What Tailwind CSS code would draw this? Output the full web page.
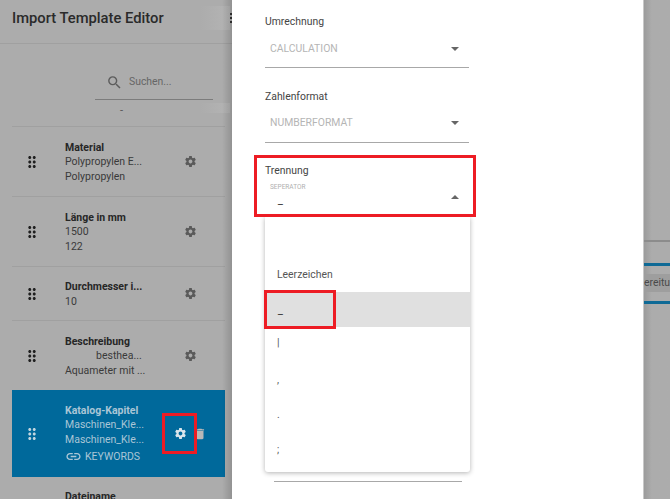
<!DOCTYPE html>
<html lang="en">
<head>
    <meta charset="UTF-8">
    <title>Import Template Editor</title>
    <script src="https://cdn.jsdelivr.net/npm/@tailwindcss/browser@4"></script>
</head>
<body class="bg-[#acacac] overflow-hidden font-['Roboto',sans-serif]">
    <div class="relative flex w-[670px] h-[499px] overflow-hidden">

        <!-- Sidebar -->
        <aside class="relative w-[232px] h-full shrink-0 overflow-hidden">
            <header class="h-[44px] border-b border-[#a0a0a0] pl-3 pt-[8px] text-[14.75px] leading-[21px] font-medium text-[#2a2a2a]">Import Template Editor</header>
            <div class="absolute left-[200px] top-[6px] w-[30px] h-[24px] bg-gradient-to-r from-transparent to-[#b4b4b4]"></div>
            <div class="absolute left-[230px] top-[13px] flex flex-col gap-[2px]">
                <span class="w-[2px] h-[2px] bg-[#333]"></span>
                <span class="w-[2px] h-[2px] bg-[#333]"></span>
                <span class="w-[2px] h-[2px] bg-[#333]"></span>
            </div>

            <div class="ml-[95px] mt-[29px] w-[118px] h-[27px] border-b border-[#7c7c7c] flex items-start gap-[6px] pl-[11px] pt-[1px]">
                <svg class="w-[17px] h-[17px] text-[#5c5c5c]" viewBox="0 0 24 24" fill="currentColor"><path d="M15.5 14h-.79l-.28-.27A6.47 6.47 0 0 0 16 9.5 6.5 6.5 0 1 0 9.5 16c1.61 0 3.09-.59 4.23-1.57l.27.28v.79l5 4.99L20.49 19l-4.99-5zm-6 0C7.01 14 5 11.99 5 9.5S7.01 5 9.5 5 14 7.01 14 9.5 11.99 14 9.5 14z"/></svg>
                <span class="text-[10.4px] leading-[16px] text-[#666]">Suchen...</span>
            </div>
            <div class="absolute left-[200px] top-[103px] w-[30px] h-[10px] bg-gradient-to-r from-transparent to-[#b4b4b4]"></div>
            <div class="h-[26px] pl-[120px] pt-[4px] text-[11px] leading-[14px] text-[#555]">-</div>

            <!-- Rows -->
            <div class="mx-3 w-[213px] text-[10.5px] leading-[14.5px] text-[#3a3a3a]">
                <div class="h-[70px] border-t border-[#a0a0a0] flex items-center">
                    <svg class="w-[18px] h-[18px] ml-[11px] text-[#1f1f1f]" viewBox="0 0 24 24" fill="currentColor"><path d="M11 18c0 1.1-.9 2-2 2s-2-.9-2-2 .9-2 2-2 2 .9 2 2zm-2-8c-1.1 0-2 .9-2 2s.9 2 2 2 2-.9 2-2-.9-2-2-2zm0-6c-1.1 0-2 .9-2 2s.9 2 2 2 2-.9 2-2-.9-2-2-2zm6 4c1.1 0 2-.9 2-2s-.9-2-2-2-2 .9-2 2 .9 2 2 2zm0 2c-1.1 0-2 .9-2 2s.9 2 2 2 2-.9 2-2-.9-2-2-2zm0 6c-1.1 0-2 .9-2 2s.9 2 2 2 2-.9 2-2-.9-2-2-2z"/></svg>
                    <div class="w-[120px] ml-[24px] pt-[2px]">
                        <div class="font-bold text-[#262626]">Material</div>
                        <div>Polypropylen E...</div>
                        <div>Polypropylen</div>
                    </div>
                    <svg class="w-[13px] h-[13px] ml-[-1px] text-[#5a5a5a]" viewBox="0 0 24 24" fill="currentColor"><path d="M19.43 12.98c.04-.32.07-.64.07-.98s-.03-.66-.07-.98l2.11-1.65c.19-.15.24-.42.12-.64l-2-3.46c-.12-.22-.39-.3-.61-.22l-2.49 1c-.52-.4-1.08-.73-1.69-.98l-.38-2.65A.488.488 0 0 0 14 2h-4c-.25 0-.46.18-.49.42l-.38 2.65c-.61.25-1.17.59-1.69.98l-2.49-1c-.23-.09-.49 0-.61.22l-2 3.46c-.13.22-.07.49.12.64l2.11 1.65c-.04.32-.07.65-.07.98s.03.66.07.98l-2.11 1.65c-.19.15-.24.42-.12.64l2 3.46c.12.22.39.3.61.22l2.49-1c.52.4 1.08.73 1.69.98l.38 2.65c.03.24.24.42.49.42h4c.25 0 .46-.18.49-.42l.38-2.65c.61-.25 1.17-.59 1.69-.98l2.49 1c.23.09.49 0 .61-.22l2-3.46c.12-.22.07-.49-.12-.64l-2.11-1.65zM12 15.5c-1.93 0-3.5-1.57-3.5-3.5s1.57-3.5 3.5-3.5 3.5 1.57 3.5 3.5-1.57 3.5-3.5 3.5z"/></svg>
                </div>
                <div class="h-[70px] border-t border-[#a0a0a0] flex items-center">
                    <svg class="w-[18px] h-[18px] ml-[11px] text-[#1f1f1f]" viewBox="0 0 24 24" fill="currentColor"><path d="M11 18c0 1.1-.9 2-2 2s-2-.9-2-2 .9-2 2-2 2 .9 2 2zm-2-8c-1.1 0-2 .9-2 2s.9 2 2 2 2-.9 2-2-.9-2-2-2zm0-6c-1.1 0-2 .9-2 2s.9 2 2 2 2-.9 2-2-.9-2-2-2zm6 4c1.1 0 2-.9 2-2s-.9-2-2-2-2 .9-2 2 .9 2 2 2zm0 2c-1.1 0-2 .9-2 2s.9 2 2 2 2-.9 2-2-.9-2-2-2zm0 6c-1.1 0-2 .9-2 2s.9 2 2 2 2-.9 2-2-.9-2-2-2z"/></svg>
                    <div class="w-[120px] ml-[24px] pt-[2px]">
                        <div class="font-bold text-[#262626]">Länge in mm</div>
                        <div>1500</div>
                        <div>122</div>
                    </div>
                    <svg class="w-[13px] h-[13px] ml-[-1px] text-[#5a5a5a]" viewBox="0 0 24 24" fill="currentColor"><path d="M19.43 12.98c.04-.32.07-.64.07-.98s-.03-.66-.07-.98l2.11-1.65c.19-.15.24-.42.12-.64l-2-3.46c-.12-.22-.39-.3-.61-.22l-2.49 1c-.52-.4-1.08-.73-1.69-.98l-.38-2.65A.488.488 0 0 0 14 2h-4c-.25 0-.46.18-.49.42l-.38 2.65c-.61.25-1.17.59-1.69.98l-2.49-1c-.23-.09-.49 0-.61.22l-2 3.46c-.13.22-.07.49.12.64l2.11 1.65c-.04.32-.07.65-.07.98s.03.66.07.98l-2.11 1.65c-.19.15-.24.42-.12.64l2 3.46c.12.22.39.3.61.22l2.49-1c.52.4 1.08.73 1.69.98l.38 2.65c.03.24.24.42.49.42h4c.25 0 .46-.18.49-.42l.38-2.65c.61-.25 1.17-.59 1.69-.98l2.49 1c.23.09.49 0 .61-.22l2-3.46c.12-.22.07-.49-.12-.64l-2.11-1.65zM12 15.5c-1.93 0-3.5-1.57-3.5-3.5s1.57-3.5 3.5-3.5 3.5 1.57 3.5 3.5-1.57 3.5-3.5 3.5z"/></svg>
                </div>
                <div class="h-[54px] border-t border-[#a0a0a0] flex items-center">
                    <svg class="w-[18px] h-[18px] ml-[11px] text-[#1f1f1f]" viewBox="0 0 24 24" fill="currentColor"><path d="M11 18c0 1.1-.9 2-2 2s-2-.9-2-2 .9-2 2-2 2 .9 2 2zm-2-8c-1.1 0-2 .9-2 2s.9 2 2 2 2-.9 2-2-.9-2-2-2zm0-6c-1.1 0-2 .9-2 2s.9 2 2 2 2-.9 2-2-.9-2-2-2zm6 4c1.1 0 2-.9 2-2s-.9-2-2-2-2 .9-2 2 .9 2 2 2zm0 2c-1.1 0-2 .9-2 2s.9 2 2 2 2-.9 2-2-.9-2-2-2zm0 6c-1.1 0-2 .9-2 2s.9 2 2 2 2-.9 2-2-.9-2-2-2z"/></svg>
                    <div class="w-[120px] ml-[24px] pt-[2px]">
                        <div class="font-bold text-[#262626]">Durchmesser i...</div>
                        <div>10</div>
                    </div>
                    <svg class="w-[13px] h-[13px] ml-[-1px] text-[#5a5a5a]" viewBox="0 0 24 24" fill="currentColor"><path d="M19.43 12.98c.04-.32.07-.64.07-.98s-.03-.66-.07-.98l2.11-1.65c.19-.15.24-.42.12-.64l-2-3.46c-.12-.22-.39-.3-.61-.22l-2.49 1c-.52-.4-1.08-.73-1.69-.98l-.38-2.65A.488.488 0 0 0 14 2h-4c-.25 0-.46.18-.49.42l-.38 2.65c-.61.25-1.17.59-1.69.98l-2.49-1c-.23-.09-.49 0-.61.22l-2 3.46c-.13.22-.07.49.12.64l2.11 1.65c-.04.32-.07.65-.07.98s.03.66.07.98l-2.11 1.65c-.19.15-.24.42-.12.64l2 3.46c.12.22.39.3.61.22l2.49-1c.52.4 1.08.73 1.69.98l.38 2.65c.03.24.24.42.49.42h4c.25 0 .46-.18.49-.42l.38-2.65c.61-.25 1.17-.59 1.69-.98l2.49 1c.23.09.49 0 .61-.22l2-3.46c.12-.22.07-.49-.12-.64l-2.11-1.65zM12 15.5c-1.93 0-3.5-1.57-3.5-3.5s1.57-3.5 3.5-3.5 3.5 1.57 3.5 3.5-1.57 3.5-3.5 3.5z"/></svg>
                </div>
                <div class="h-[70px] border-t border-[#a0a0a0] flex items-center">
                    <svg class="w-[18px] h-[18px] ml-[11px] text-[#1f1f1f]" viewBox="0 0 24 24" fill="currentColor"><path d="M11 18c0 1.1-.9 2-2 2s-2-.9-2-2 .9-2 2-2 2 .9 2 2zm-2-8c-1.1 0-2 .9-2 2s.9 2 2 2 2-.9 2-2-.9-2-2-2zm0-6c-1.1 0-2 .9-2 2s.9 2 2 2 2-.9 2-2-.9-2-2-2zm6 4c1.1 0 2-.9 2-2s-.9-2-2-2-2 .9-2 2 .9 2 2 2zm0 2c-1.1 0-2 .9-2 2s.9 2 2 2 2-.9 2-2-.9-2-2-2zm0 6c-1.1 0-2 .9-2 2s.9 2 2 2 2-.9 2-2-.9-2-2-2z"/></svg>
                    <div class="w-[120px] ml-[24px] pt-[2px]">
                        <div class="font-bold text-[#262626]">Beschreibung</div>
                        <div class="pl-[31px]">besthea...</div>
                        <div>Aquameter mit ...</div>
                    </div>
                    <svg class="w-[13px] h-[13px] ml-[-1px] text-[#5a5a5a]" viewBox="0 0 24 24" fill="currentColor"><path d="M19.43 12.98c.04-.32.07-.64.07-.98s-.03-.66-.07-.98l2.11-1.65c.19-.15.24-.42.12-.64l-2-3.46c-.12-.22-.39-.3-.61-.22l-2.49 1c-.52-.4-1.08-.73-1.69-.98l-.38-2.65A.488.488 0 0 0 14 2h-4c-.25 0-.46.18-.49.42l-.38 2.65c-.61.25-1.17.59-1.69.98l-2.49-1c-.23-.09-.49 0-.61.22l-2 3.46c-.13.22-.07.49.12.64l2.11 1.65c-.04.32-.07.65-.07.98s.03.66.07.98l-2.11 1.65c-.19.15-.24.42-.12.64l2 3.46c.12.22.39.3.61.22l2.49-1c.52.4 1.08.73 1.69.98l.38 2.65c.03.24.24.42.49.42h4c.25 0 .46-.18.49-.42l.38-2.65c.61-.25 1.17-.59 1.69-.98l2.49 1c.23.09.49 0 .61-.22l2-3.46c.12-.22.07-.49-.12-.64l-2.11-1.65zM12 15.5c-1.93 0-3.5-1.57-3.5-3.5s1.57-3.5 3.5-3.5 3.5 1.57 3.5 3.5-1.57 3.5-3.5 3.5z"/></svg>
                </div>
                <div class="h-[87px] bg-[#00699b] flex items-center text-[#aac6d6]">
                    <svg class="w-[18px] h-[18px] ml-[11px] text-[#c2d6e0]" viewBox="0 0 24 24" fill="currentColor"><path d="M11 18c0 1.1-.9 2-2 2s-2-.9-2-2 .9-2 2-2 2 .9 2 2zm-2-8c-1.1 0-2 .9-2 2s.9 2 2 2 2-.9 2-2-.9-2-2-2zm0-6c-1.1 0-2 .9-2 2s.9 2 2 2 2-.9 2-2-.9-2-2-2zm6 4c1.1 0 2-.9 2-2s-.9-2-2-2-2 .9-2 2 .9 2 2 2zm0 2c-1.1 0-2 .9-2 2s.9 2 2 2 2-.9 2-2-.9-2-2-2zm0 6c-1.1 0-2 .9-2 2s.9 2 2 2 2-.9 2-2-.9-2-2-2z"/></svg>
                    <div class="w-[86px] ml-[24px] pt-[2px]">
                        <div class="font-bold">Katalog-Kapitel</div>
                        <div>Maschinen_Kle...</div>
                        <div>Maschinen_Kle...</div>
                        <div class="flex items-center gap-[3px] mt-[1px]">
                            <svg class="w-[17px] h-[17px]" viewBox="0 0 24 24" fill="currentColor"><path d="M3.9 12c0-1.71 1.39-3.1 3.1-3.1h4V7H7c-2.76 0-5 2.24-5 5s2.24 5 5 5h4v-1.9H7c-1.71 0-3.1-1.39-3.1-3.1zM8 13h8v-2H8v2zm9-6h-4v1.9h4c1.71 0 3.1 1.39 3.1 3.1s-1.39 3.1-3.1 3.1h-4V17h4c2.76 0 5-2.24 5-5s-2.24-5-5-5z"/></svg>
                            <span>KEYWORDS</span>
                        </div>
                    </div>
                    <svg class="w-[13px] h-[13px] ml-[23px] text-[#dbe6ec]" viewBox="0 0 24 24" fill="currentColor"><path d="M19.43 12.98c.04-.32.07-.64.07-.98s-.03-.66-.07-.98l2.11-1.65c.19-.15.24-.42.12-.64l-2-3.46c-.12-.22-.39-.3-.61-.22l-2.49 1c-.52-.4-1.08-.73-1.69-.98l-.38-2.65A.488.488 0 0 0 14 2h-4c-.25 0-.46.18-.49.42l-.38 2.65c-.61.25-1.17.59-1.69.98l-2.49-1c-.23-.09-.49 0-.61.22l-2 3.46c-.13.22-.07.49.12.64l2.11 1.65c-.04.32-.07.65-.07.98s.03.66.07.98l-2.11 1.65c-.19.15-.24.42-.12.64l2 3.46c.12.22.39.3.61.22l2.49-1c.52.4 1.08.73 1.69.98l.38 2.65c.03.24.24.42.49.42h4c.25 0 .46-.18.49-.42l.38-2.65c.61-.25 1.17-.59 1.69-.98l2.49 1c.23.09.49 0 .61-.22l2-3.46c.12-.22.07-.49-.12-.64l-2.11-1.65zM12 15.5c-1.93 0-3.5-1.57-3.5-3.5s1.57-3.5 3.5-3.5 3.5 1.57 3.5 3.5-1.57 3.5-3.5 3.5z"/></svg>
                    <svg class="w-[14px] h-[14px] ml-[6px] text-[#b8b8b8]" viewBox="0 0 24 24" fill="currentColor"><path d="M6 19c0 1.1.9 2 2 2h8c1.1 0 2-.9 2-2V7H6v12zM19 4h-3.5l-1-1h-5l-1 1H5v2h14V4z"/></svg>
                </div>
                <div class="pl-[53px] pt-[13px] font-bold text-[#262626]">Dateiname</div>
            </div>
            <div class="absolute right-0 top-0 w-[10px] h-full bg-gradient-to-r from-transparent to-black/15"></div>
        </aside>

        <!-- Dialog -->
        <main class="relative w-[411px] h-full shrink-0 bg-white pl-[33px] text-[#3c3c3c]">
            <div class="w-[204px] h-[68px] border-b border-[#a8a8a8] pt-[14px]">
                <div class="text-[10.4px] leading-[15px] text-[#444]">Umrechnung</div>
                <div class="flex items-center justify-between pl-[5px] pr-[10px] mt-[12px] text-[10.4px] leading-[15px] text-[#b5b5b5]">
                    <span>CALCULATION</span>
                    <span class="w-0 h-0 border-x-[4px] border-x-transparent border-t-[4px] border-t-[#666]"></span>
                </div>
            </div>
            <div class="w-[204px] h-[75px] border-b border-[#a8a8a8] pt-[21px]">
                <div class="text-[10.4px] leading-[15px] text-[#444]">Zahlenformat</div>
                <div class="flex items-center justify-between pl-[5px] pr-[10px] mt-[11px] text-[10.4px] leading-[15px] text-[#b5b5b5]">
                    <span>NUMBERFORMAT</span>
                    <span class="w-0 h-0 border-x-[4px] border-x-transparent border-t-[4px] border-t-[#666]"></span>
                </div>
            </div>
            <div class="w-[204px] pt-[20px]">
                <div class="text-[10.4px] leading-[15px] text-[#444]">Trennung</div>
                <div class="relative pl-[5px] pr-[10px] mt-[5px] h-[33px]">
                    <div class="text-[6.5px] leading-[8px] text-[#b0b0b0]">SEPERATOR</div>
                    <div class="pl-[7px] mt-[6px] text-[10.4px] leading-[15px] text-[#333]">–</div>
                    <span class="absolute right-[10px] top-[12px] w-0 h-0 border-x-[4px] border-x-transparent border-b-[4px] border-b-[#666]"></span>
                </div>
            </div>

            <!-- Open select menu -->
            <div class="relative z-10 w-[205px] h-[255px] mt-[1px] pt-[5px] bg-white rounded-b-[3px] shadow-[0_1px_5px_rgba(0,0,0,0.3)] text-[10.4px] text-[#555]">
                <div class="h-[35px]"></div>
                <div class="h-[35px] flex items-center pl-3 pt-[1px]">Leerzeichen</div>
                <div class="h-[35px] flex items-center pl-3 pt-[11px] bg-[#e0e0e0] text-[#333]">–</div>
                <div class="h-[35px] flex items-center pl-3 pb-[4px]">|</div>
                <div class="h-[35px] flex items-center pl-3 pt-[1px]">,</div>
                <div class="h-[35px] flex items-center pl-3">.</div>
                <div class="h-[35px] flex items-center pl-3">;</div>
            </div>
            <div class="ml-[9px] mt-[9px] w-[188px] border-b border-[#a8a8a8]"></div>
        </main>

        <!-- Background page to the right of the dialog -->
        <div class="grow h-full border-l border-[#c8c8c8] overflow-hidden bg-gradient-to-r from-[#9c9c9c] to-[#acacac] to-30%">
            <div class="mt-[240px] h-[2px] bg-[#8c8c8c]"></div>
            <div class="mt-[21px] h-[3px] bg-[#0f6a96]"></div>
            <div class="mt-[8px] h-[18px] bg-[#9e9e9e] text-[10.4px] leading-[17px] text-[#4a4a4a] whitespace-nowrap">ereitu</div>
            <div class="mt-[9px] h-[3px] bg-[#0f6a96]"></div>
        </div>

        <!-- Red annotation boxes -->
        <div class="absolute z-20 left-[254px] top-[155px] w-[222px] h-[62px] border-[3px] border-[#ed1c24]"></div>
        <div class="absolute z-20 left-[264px] top-[290px] w-[72px] h-[39px] border-[3px] border-[#ed1c24]"></div>
        <div class="absolute z-20 left-[162px] top-[413px] w-[35px] h-[41px] border-[3px] border-[#ed1c24]"></div>
    </div>
</body>
</html>
